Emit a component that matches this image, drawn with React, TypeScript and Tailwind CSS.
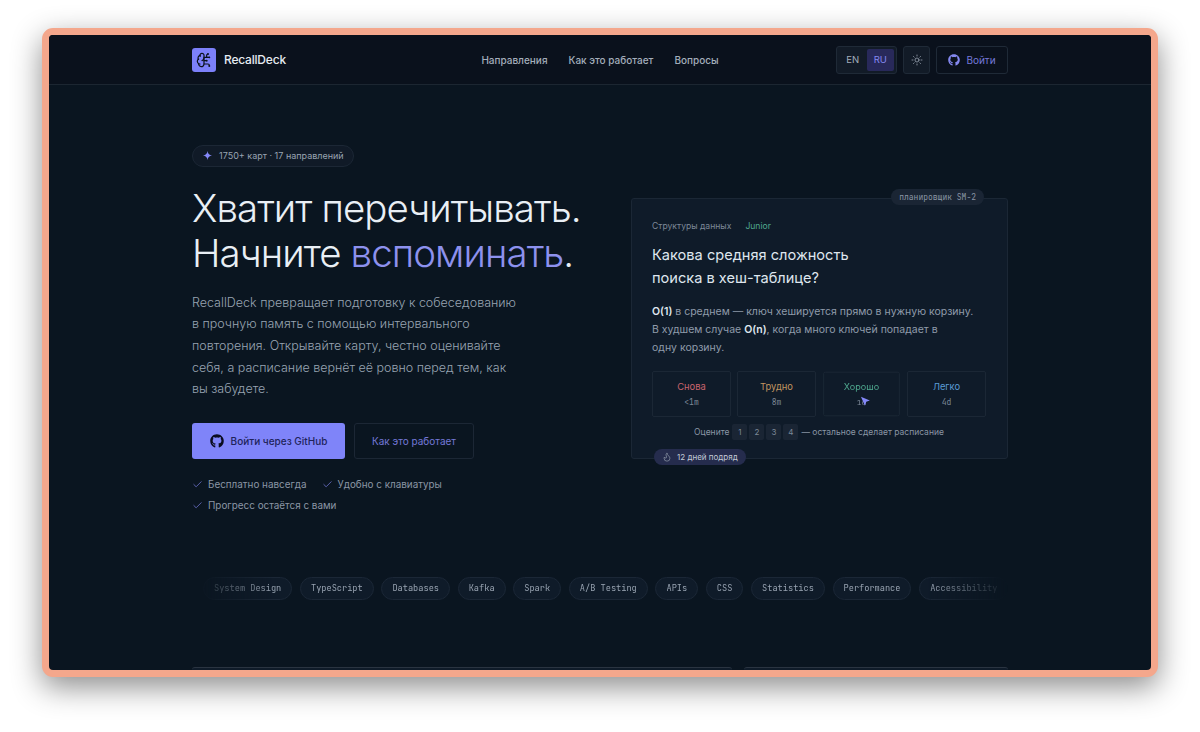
import React from 'react'
import { BrainCircuit, Check, Flame, Sun } from 'lucide-react'
import { FaGithub } from 'react-icons/fa'

const mono = "font-['JetBrains_Mono','DejaVu_Sans_Mono','Liberation_Mono',monospace]"

const grades = [
    { label: 'Снова', time: '<1m', color: 'text-[#c9646d]' },
    { label: 'Трудно', time: '8m', color: 'text-[#c09560]' },
    { label: 'Хорошо', time: '1d', color: 'text-[#4fa98f]' },
    { label: 'Легко', time: '4d', color: 'text-[#5a9bd5]' },
]

const topics = ['System Design', 'TypeScript', 'Databases', 'Kafka', 'Spark', 'A/B Testing', 'APIs', 'CSS', 'Statistics', 'Performance', 'Accessibility']

const App = () => {
    return (
        <div className="h-[732px] w-[1200px] overflow-hidden bg-white pt-[28px] font-['Inter',sans-serif]">
            <div className="mx-auto flex h-[649px] w-[1116px] flex-col overflow-hidden rounded-[11px] border-[7px] border-[#f4a78c] bg-[#0a1520] shadow-[0_10px_30px_rgba(0,0,0,0.45)]">
                {/* Header */}
                <header className="h-[50px] shrink-0 border-b border-[#1c2631] bg-[#0a111c]">
                    <div className="mx-[143px] grid h-[49px] grid-cols-[1fr_auto_1fr] items-center pt-[1px]">
                        <div className="flex items-center gap-2">
                            <div className="flex h-6 w-6 items-center justify-center rounded-[3px] bg-[#7c80fa]">
                                <BrainCircuit className="h-4 w-4 text-[#0a111c]" strokeWidth={1.8} />
                            </div>
                            <span className="text-[12px] font-medium tracking-[-0.2px] text-[#e6ecf2]">RecallDeck</span>
                        </div>
                        <nav className="flex items-center gap-[21px] text-[10px] font-medium text-[#a3aebb]">
                            <span>Направления</span>
                            <span>Как это работает</span>
                            <span>Вопросы</span>
                        </nav>
                        <div className="flex items-center justify-end gap-[6px]">
                            <div className="flex h-[28px] w-[61px] items-center rounded-[3px] border border-[#1f2a37] bg-[#121b27] p-[2px] text-[9.500px]">
                                <span className="flex h-full flex-1 items-center justify-center text-[#a3aebb]">EN</span>
                                <span className="flex h-full flex-1 items-center justify-center rounded-[2px] bg-[#28295a] text-[#8488f0]">RU</span>
                            </div>
                            <div className="flex h-[28px] w-[27px] items-center justify-center rounded-[3px] border border-[#1f2a37] bg-[#121b27]">
                                <Sun className="h-3 w-3 text-[#a3aebb]" strokeWidth={1.5} />
                            </div>
                            <div className="flex h-[28px] w-[72px] items-center justify-center gap-[6px] rounded-[3px] border border-[#1f2a37] text-[10px] text-[#7478d8]">
                                <FaGithub className="h-3 w-3 text-[#8488f0]" />
                                <span>Войти</span>
                            </div>
                        </div>
                    </div>
                </header>

                {/* Hero */}
                <main className="mx-[143px] flex flex-1 flex-col">
                    <section className="flex justify-between pt-[60px]">
                        <div className="mt-[-3px] w-[400px]">
                            <div className="inline-flex h-[22px] items-center gap-[7px] rounded-full border border-[#1c2735] bg-[#101a27] pl-[10px] pr-[9px] text-[9px] text-[#98a4b2]">
                                <svg viewBox="0 0 24 24" className="h-[9px] w-[9px] fill-[#8488f8]">
                                    <path d="M12 0c1 7 4 10.500 12 12-8 1.500-11 5-12 12-1-7-4-10.500-12-12 8-1.500 11-5 12-12z" />
                                </svg>
                                <span>1750+ карт · 17 направлений</span>
                            </div>
                            <h1 className="mt-[19px] whitespace-nowrap text-[38.400px] font-light leading-[45px] tracking-[-0.9px] text-[#e9eff5]">
                                Хватит перечитывать.
                                <br />
                                Начните <span className="text-[#8d91ee]">вспоминать</span>.
                            </h1>
                            <p className="mt-[16px] w-[332px] text-[12.500px] font-light leading-[21.700px] text-[#98a4b2]">
                                RecallDeck превращает подготовку к собеседованию в прочную память с помощью интервального повторения. Открывайте карту, честно оценивайте себя, а расписание вернёт её ровно перед тем, как вы забудете.
                            </p>
                            <div className="mt-[23px] flex gap-[9px]">
                                <div className="flex h-[36px] w-[153px] items-center justify-center gap-[7px] rounded-[3px] bg-[#7f84f9] text-[10px] font-medium text-[#20235a]">
                                    <FaGithub className="h-[14px] w-[14px] text-[#0a0c20]" />
                                    <span>Войти через GitHub</span>
                                </div>
                                <div className="flex h-[36px] w-[120px] items-center justify-center rounded-[3px] border border-[#1c2735] text-[10px] text-[#7478d8]">
                                    Как это работает
                                </div>
                            </div>
                            <ul className="mt-[18px] flex w-[300px] flex-wrap gap-x-[15px] gap-y-[6px] text-[9.900px] leading-[15px] text-[#8a96a5]">
                                <li className="flex items-center gap-[5px]"><Check className="h-[11px] w-[11px] text-[#7c80e8]" strokeWidth={1.5} />Бесплатно навсегда</li>
                                <li className="flex items-center gap-[5px]"><Check className="h-[11px] w-[11px] text-[#7c80e8]" strokeWidth={1.5} />Удобно с клавиатуры</li>
                                <li className="flex items-center gap-[5px]"><Check className="h-[11px] w-[11px] text-[#7c80e8]" strokeWidth={1.5} />Прогресс остаётся с вами</li>
                            </ul>
                        </div>

                        {/* Review card */}
                        <div className="relative mt-[53px] h-[261px] w-[377px] rounded-[3px] border border-[#1b2735] bg-[#0f1b29] pl-[20px] pr-[21px] pt-[21px]">
                            <span className={`absolute right-[23px] top-[-10px] flex h-[16px] items-center rounded-full bg-[#1a2534] px-[8px] text-[8px] text-[#8a96a5] ${mono}`}>
                                планировщик SM-2
                            </span>
                            <div className="flex gap-[14px] text-[8.600px] leading-[12px]">
                                <span className="text-[#7d8998]">Структуры данных</span>
                                <span className="text-[#4fa98f]">Junior</span>
                            </div>
                            <h2 className="mt-[12px] text-[14.600px] leading-[22.500px] text-[#dfe6ee]">
                                Какова средняя сложность
                                <br />
                                поиска в хеш-таблице?
                            </h2>
                            <p className="mt-[14px] whitespace-nowrap text-[10.500px] leading-[18px] text-[#8f9bab]">
                                <b className="font-semibold text-[#dfe6ee]">O(1)</b> в среднем — ключ хешируется прямо в нужную корзину.
                                <br />
                                В худшем случае <b className="font-semibold text-[#dfe6ee]">O(n)</b>, когда много ключей попадает в
                                <br />
                                одну корзину.
                            </p>
                            <div className="mt-[14px] grid grid-cols-4 gap-[6px]">
                                {grades.map((g) => (
                                    <div key={g.label} className={`relative flex h-[46px] flex-col items-center justify-center gap-[4px] rounded-[2px] border border-[#1b2735] ${g.label === 'Хорошо' ? 'scale-[0.97]' : ''}`}>
                                        <span className={`text-[9.400px] leading-[13px] ${g.color}`}>{g.label}</span>
                                        <span className={`text-[8px] leading-[11px] text-[#7d8998] ${mono}`}>{g.time}</span>
                                        {g.label === 'Хорошо' && (
                                            <svg viewBox="0 0 12 12" className="absolute left-[37px] top-[24px] h-[11px] w-[11px] fill-[#8488f8]">
                                                <path d="M1 1l10 4-4 1.500L5.500 11z" />
                                            </svg>
                                        )}
                                    </div>
                                ))}
                            </div>
                            <div className="mt-[7px] flex items-center justify-center gap-[2px] text-[8.500px] text-[#8a96a5]">
                                <span className="mr-[1px]">Оцените</span>
                                {['1', '2', '3', '4'].map((n) => (
                                    <span key={n} className="flex h-[16px] w-[15px] items-center justify-center rounded-[2px] bg-[#1a2534] text-[8px] text-[#7d8998]">{n}</span>
                                ))}
                                <span className="ml-[1px]">— остальное сделает расписание</span>
                            </div>
                            <span className="absolute bottom-[-7px] left-[22px] flex h-[16px] items-center gap-[5px] rounded-full bg-[#252c4d] px-[8px] text-[8px] text-[#c3cbd6]">
                                <Flame className="h-[10px] w-[10px] text-[#9aa4b2]" strokeWidth={1.5} />
                                12 дней подряд
                            </span>
                        </div>
                    </section>

                    {/* Topics strip, fades out at both ends */}
                    <div className={`mt-[64px] flex items-center gap-[7.700px] overflow-hidden pl-[11px] text-[8.650px] text-[#98a3b1] [mask-image:linear-gradient(90deg,transparent,black_10%,black_90%,transparent)] ${mono}`}>
                        {topics.map((t) => (
                            <span key={t} className="flex h-[23px] shrink-0 items-center whitespace-nowrap rounded-full border border-[#1b2736] bg-[#0f1b29] px-[10px]">{t}</span>
                        ))}
                    </div>

                    {/* Cards peeking at the fold */}
                    <div className="mt-auto flex gap-[12px]">
                        <div className="h-[3px] flex-[540] rounded-t-[3px] border-t border-[#2a3441] bg-[#0f1b29]" />
                        <div className="h-[3px] flex-[264] rounded-t-[3px] border-t border-[#2a3441] bg-[#0f1b29]" />
                    </div>
                </main>
            </div>
        </div>
    )
}

export default App
